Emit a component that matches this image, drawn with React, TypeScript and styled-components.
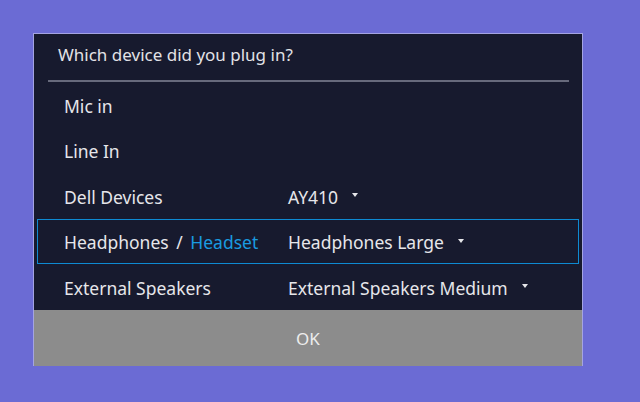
import styled, { createGlobalStyle } from "styled-components";

const GlobalStyle = createGlobalStyle`
  html, body {
    margin: 0;
    padding: 0;
    background: #6b6bd4;
    font-family: "Noto Sans", "Open Sans", sans-serif;
  }
`;

const Page = styled.div`
  width: 640px;
  height: 402px;
  padding: 33px 0 0 33px;
  box-sizing: border-box;
`;

const Dialog = styled.div`
  width: 550px;
  box-sizing: border-box;
  background: #171a2e;
  border: 1px solid #a4a4e2;
  border-bottom: none;
  display: flex;
  flex-direction: column;
`;

const Title = styled.div`
  height: 46px;
  box-sizing: border-box;
  padding: 0 0 5px 24px;
  display: flex;
  align-items: center;
  color: #e2e2e6;
  font-size: 17px;
`;

const Divider = styled.div`
  height: 2px;
  margin: 0 13px 0 14px;
  background: #676a7c;
`;

const List = styled.div`
  display: flex;
  flex-direction: column;
`;

const Row = styled.div<{ $focused?: boolean }>`
  height: 45.5px;
  box-sizing: border-box;
  margin: 0 3px;
  padding: 2px 0 0 26px;
  display: grid;
  grid-template-columns: 224px 1fr;
  align-items: center;
  border: 1px solid ${(p) => (p.$focused ? "#0e8ad2" : "transparent")};
  color: #e6e6ea;
  font-size: 17.5px;
`;

const Label = styled.span`
  white-space: nowrap;
`;

const Slash = styled.span`
  margin: 0 3px;
`;

const Accent = styled.span`
  color: #1a9be0;
`;

const Select = styled.span`
  display: flex;
  align-items: center;
  gap: 14px;
  white-space: nowrap;
`;

const Caret = styled.span`
  width: 0;
  height: 0;
  border-left: 3.5px solid transparent;
  border-right: 3.5px solid transparent;
  border-top: 4px solid #e6e6ea;
  margin-top: -3px;
`;

const OkButton = styled.button`
  height: 56px;
  padding-top: 2px;
  border: none;
  background: #8c8c8c;
  color: #ececec;
  font-family: inherit;
  font-size: 17px;
  cursor: pointer;
`;

type Item = { label: React.ReactNode; value?: string; focused?: boolean };

const items: Item[] = [
  { label: "Mic in" },
  { label: "Line In" },
  { label: "Dell Devices", value: "AY410" },
  {
    label: (
      <>
        Headphones<Slash> / </Slash>
        <Accent>Headset</Accent>
      </>
    ),
    value: "Headphones Large",
    focused: true,
  },
  { label: "External Speakers", value: "External Speakers Medium" },
];

export default function App() {
  return (
    <>
      <GlobalStyle />
      <Page>
        <Dialog>
          <Title>Which device did you plug in?</Title>
          <Divider />
          <List>
            {items.map((item, i) => (
              <Row key={i} $focused={item.focused}>
                <Label>{item.label}</Label>
                {item.value && (
                  <Select>
                    {item.value}
                    <Caret />
                  </Select>
                )}
              </Row>
            ))}
          </List>
          <OkButton>OK</OkButton>
        </Dialog>
      </Page>
    </>
  );
}
